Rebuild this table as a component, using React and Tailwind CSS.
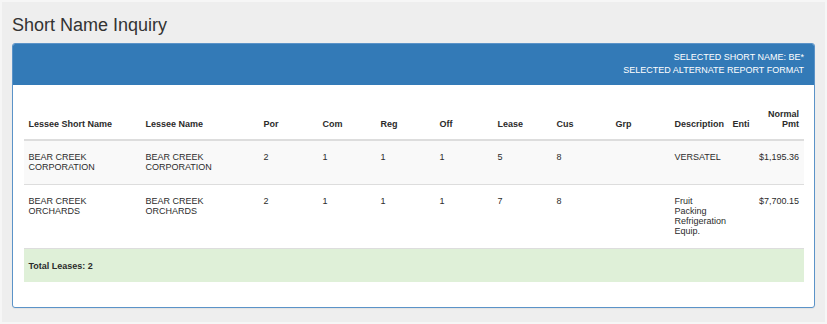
import React from "react";

const columns = [
  { key: "short", label: "Lessee Short Name", w: "w-[117px]" },
  { key: "name", label: "Lessee Name", w: "w-[118px]" },
  { key: "por", label: "Por", w: "w-[59px]" },
  { key: "com", label: "Com", w: "w-[58px]" },
  { key: "reg", label: "Reg", w: "w-[59px]" },
  { key: "off", label: "Off", w: "w-[58px]" },
  { key: "lease", label: "Lease", w: "w-[59px]" },
  { key: "cus", label: "Cus", w: "w-[59px]" },
  { key: "grp", label: "Grp", w: "w-[59px]" },
  { key: "desc", label: "Description", w: "w-[58px]" },
  { key: "enti", label: "Enti", w: "w-[28px]" },
  { key: "pmt", label: "Normal Pmt", w: "w-[48px]", right: true },
];

const rows = [
  {
    short: "BEAR CREEK CORPORATION",
    name: "BEAR CREEK CORPORATION",
    por: "2",
    com: "1",
    reg: "1",
    off: "1",
    lease: "5",
    cus: "8",
    grp: "",
    desc: "VERSATEL",
    enti: "",
    pmt: "$1,195.36",
  },
  {
    short: "BEAR CREEK ORCHARDS",
    name: "BEAR CREEK ORCHARDS",
    por: "2",
    com: "1",
    reg: "1",
    off: "1",
    lease: "7",
    cus: "8",
    grp: "",
    desc: "Fruit Packing Refrigeration Equip.",
    enti: "",
    pmt: "$7,700.15",
  },
];

export default function App() {
  return (
    <div className="w-[827px] h-[324px] bg-[#f6f6f6] p-[2px] font-['Liberation_Sans',Arial,sans-serif] text-[#333]">
      <div className="h-full bg-[#eeeeee] pt-[12.5px] px-[10px]">
        <h1 className="text-[18px] leading-[20px] font-normal text-[#333]">Short Name Inquiry</h1>

        <div className="mt-[8.5px] border border-[#5b93c8] rounded-[3px] overflow-hidden bg-white shadow-[0_1px_1px_rgba(0,0,0,0.05)]">
          <div className="h-[41px] bg-[#337ab7] pt-[7px] pr-[10px] text-right text-white text-[9px] leading-[13.4px] uppercase">
            <div>Selected Short Name: BE*</div>
            <div>Selected Alternate Report Format</div>
          </div>

          <div className="p-[11px] pb-[25px]">
            <table className="w-[780px] table-fixed border-collapse text-[9px] leading-[10px] text-[#2b2b2b]">
              <colgroup>
                {columns.map((c) => (
                  <col key={c.key} className={c.w} />
                ))}
              </colgroup>
              <thead>
                <tr className="border-b-2 border-[#dddddd]">
                  {columns.map((c) => (
                    <th
                      key={c.key}
                      className={
                        c.right
                          ? "align-bottom pt-[13px] pb-[10px] pl-[4.5px] pr-[5px] font-bold text-right"
                          : "align-bottom pt-[13px] pb-[10px] pl-[4.5px] pr-[2px] font-bold text-left"
                      }
                    >
                      {c.key === "pmt" ? (
                        <>
                          Normal
                          <br />
                          Pmt
                        </>
                      ) : (
                        c.label
                      )}
                    </th>
                  ))}
                </tr>
              </thead>
              <tbody>
                {rows.map((r, i) => (
                  <tr
                    key={r.short}
                    className={i === 0 ? "bg-[#f9f9f9] border-b border-[#dddddd]" : "bg-white border-b border-[#dddddd]"}
                  >
                    {columns.map((c) => (
                      <td
                        key={c.key}
                        className={
                          c.right
                            ? "align-top pt-[10.5px] pb-[12.5px] pl-[2px] pr-[5px] text-right whitespace-nowrap"
                            : "align-top pt-[10.5px] pb-[12.5px] pl-[4.5px] pr-[2px] text-left"
                        }
                      >
                        {r[c.key]}
                      </td>
                    ))}
                  </tr>
                ))}
                <tr className="bg-[#dff0d8]">
                  <td colSpan={12} className="pt-[12px] pb-[11px] pl-[4.5px] font-bold">
                    Total Leases: 2
                  </td>
                </tr>
              </tbody>
            </table>
          </div>
        </div>
      </div>
    </div>
  );
}
